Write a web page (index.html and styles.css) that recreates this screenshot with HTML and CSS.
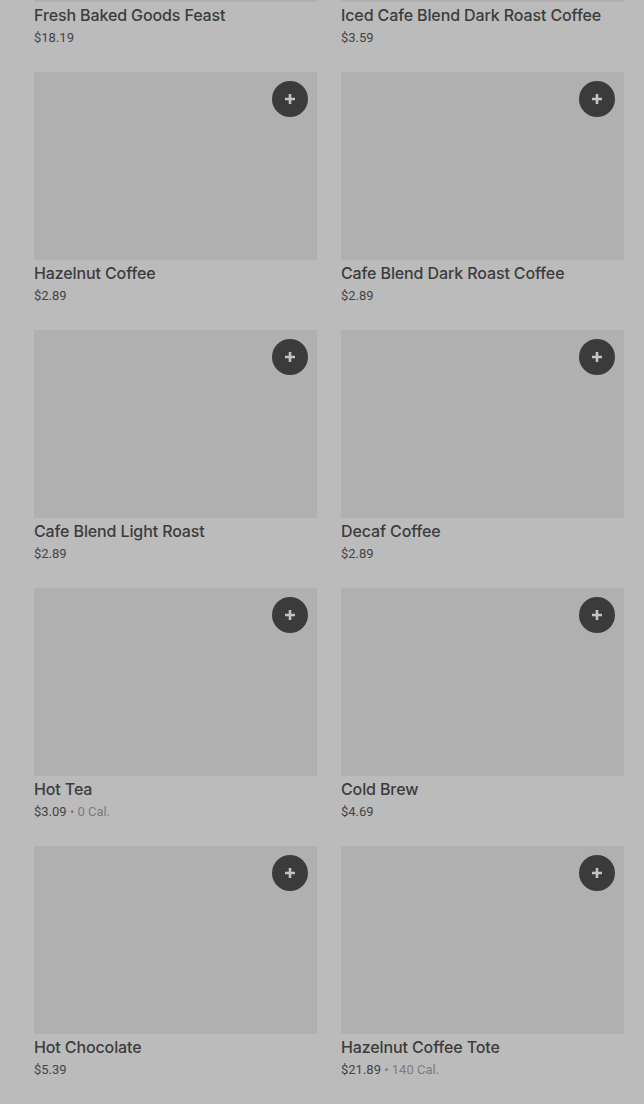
FILE: index.html
```html
<!DOCTYPE html>
<html lang="en">
<head>
<meta charset="utf-8">
<title>Menu</title>
<link rel="stylesheet" href="styles.css">
</head>
<body>
<div class="menu">
	<div class="item">
		<div class="thumb"><button class="add"><svg viewBox="0 0 14 14"><path d="M7 2v10M2 7h10"/></svg></button></div>
		<div class="name">Fresh Baked Goods Feast</div>
		<div class="price">$18.19</div>
	</div>
	<div class="item">
		<div class="thumb"><button class="add"><svg viewBox="0 0 14 14"><path d="M7 2v10M2 7h10"/></svg></button></div>
		<div class="name">Iced Cafe Blend Dark Roast Coffee</div>
		<div class="price">$3.59</div>
	</div>
	<div class="item">
		<div class="thumb"><button class="add"><svg viewBox="0 0 14 14"><path d="M7 2v10M2 7h10"/></svg></button></div>
		<div class="name">Hazelnut Coffee</div>
		<div class="price">$2.89</div>
	</div>
	<div class="item">
		<div class="thumb"><button class="add"><svg viewBox="0 0 14 14"><path d="M7 2v10M2 7h10"/></svg></button></div>
		<div class="name">Cafe Blend Dark Roast Coffee</div>
		<div class="price">$2.89</div>
	</div>
	<div class="item">
		<div class="thumb"><button class="add"><svg viewBox="0 0 14 14"><path d="M7 2v10M2 7h10"/></svg></button></div>
		<div class="name">Cafe Blend Light Roast</div>
		<div class="price">$2.89</div>
	</div>
	<div class="item">
		<div class="thumb"><button class="add"><svg viewBox="0 0 14 14"><path d="M7 2v10M2 7h10"/></svg></button></div>
		<div class="name">Decaf Coffee</div>
		<div class="price">$2.89</div>
	</div>
	<div class="item">
		<div class="thumb"><button class="add"><svg viewBox="0 0 14 14"><path d="M7 2v10M2 7h10"/></svg></button></div>
		<div class="name">Hot Tea</div>
		<div class="price">$3.09 <span class="cal">• 0 Cal.</span></div>
	</div>
	<div class="item">
		<div class="thumb"><button class="add"><svg viewBox="0 0 14 14"><path d="M7 2v10M2 7h10"/></svg></button></div>
		<div class="name">Cold Brew</div>
		<div class="price">$4.69</div>
	</div>
	<div class="item">
		<div class="thumb"><button class="add"><svg viewBox="0 0 14 14"><path d="M7 2v10M2 7h10"/></svg></button></div>
		<div class="name">Hot Chocolate</div>
		<div class="price">$5.39</div>
	</div>
	<div class="item">
		<div class="thumb"><button class="add"><svg viewBox="0 0 14 14"><path d="M7 2v10M2 7h10"/></svg></button></div>
		<div class="name">Hazelnut Coffee Tote</div>
		<div class="price">$21.89 <span class="cal">• 140 Cal.</span></div>
	</div>
</div>
</body>
</html>
```

FILE: styles.css
```css
* {margin:0; padding:0; box-sizing:border-box}
html, body {background-color:#bbbbbb; overflow:hidden}
body {font-family: Roboto, "Liberation Sans", sans-serif; color:#3d3d3d}

.menu {
	display:grid;
	grid-template-columns: 283px 283px;
	column-gap:24px;
	row-gap:25px;
	padding:0 20px 0 34px;
	margin-top:-186px;
}
.thumb {
	position:relative;
	height:188px;
	background-color:#b0b0b0;
}
.add {
	position:absolute;
	top:9px;
	right:9px;
	width:36px;
	height:36px;
	border:none;
	border-radius:50%;
	background-color:#3b3b3b;
	display:flex;
	align-items:center;
	justify-content:center;
}
.add svg {
	width:14px;
	height:14px;
	stroke:#c4c4c4;
	stroke-width:2.6;
	fill:none;
}
.name {
	margin-top:3px;
	font-family: Inter, Roboto, sans-serif;
	font-size:16px;
	font-weight:500;
	letter-spacing:-0.12px;
	line-height:20px;
	color:#3c3c3c;
}
.price {
	margin-top:4px;
	font-size:13px;
	line-height:18px;
	color:#444444;
}
.cal {color:#7c7c7c}
```
